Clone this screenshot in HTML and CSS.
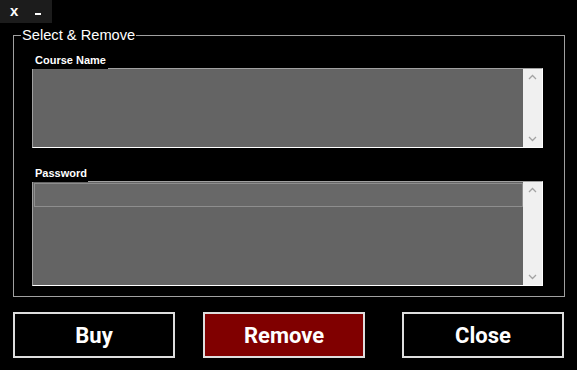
FILE: index.html
```html
<!DOCTYPE html>
<html>
<head>
<meta charset="utf-8">
<link rel="stylesheet" href="styles.css">
</head>
<body>
<div class="titlebar">
  <span class="tb-btn tb-close">x</span>
  <span class="tb-btn tb-min"></span>
</div>
<fieldset class="group">
  <legend class="group-title">Select &amp; Remove</legend>
  <div class="field">
    <div class="field-label">Course Name</div>
    <div class="listbox lb-course">
      <div class="lb-body"></div>
      <div class="scrollbar">
        <svg class="arrow" width="17" height="17" viewBox="0 0 17 17"><path d="M5 10 L8.5 6.5 L12 10" fill="none" stroke="#a3a3a3" stroke-width="1.3"/></svg>
        <svg class="arrow" width="17" height="17" viewBox="0 0 17 17"><path d="M5 7 L8.5 10.5 L12 7" fill="none" stroke="#a3a3a3" stroke-width="1.3"/></svg>
      </div>
    </div>
  </div>
  <div class="field field-pass">
    <div class="field-label label-pass">Password</div>
    <div class="listbox lb-pass">
      <div class="lb-body"><div class="lb-item"></div></div>
      <div class="scrollbar">
        <svg class="arrow" width="17" height="17" viewBox="0 0 17 17"><path d="M5 10 L8.5 6.5 L12 10" fill="none" stroke="#a3a3a3" stroke-width="1.3"/></svg>
        <svg class="arrow" width="17" height="17" viewBox="0 0 17 17"><path d="M5 7 L8.5 10.5 L12 7" fill="none" stroke="#a3a3a3" stroke-width="1.3"/></svg>
      </div>
    </div>
  </div>
</fieldset>
<div class="buttons">
  <button class="btn btn-buy">Buy</button>
  <button class="btn btn-remove">Remove</button>
  <button class="btn btn-close">Close</button>
</div>
</body>
</html>
```
FILE: styles.css
```css
html, body {
  margin: 0;
  padding: 0;
  background: #000;
  width: 577px;
  height: 370px;
  overflow: hidden;
  font-family: "Liberation Sans", Arial, sans-serif;
  color: #fff;
}

.titlebar {
  width: 52px;
  height: 23px;
  background: #1c1c1c;
  display: flex;
  align-items: center;
  box-sizing: border-box;
  padding-left: 10px;
}

.tb-btn {
  font-weight: bold;
  font-size: 15px;
  line-height: 15px;
  color: #fff;
}

.tb-close {
  margin-top: -3px;
}

.tb-min {
  width: 6px;
  height: 2px;
  background: #fff;
  margin-left: 17px;
  margin-top: 5px;
}

.group {
  margin: 4px 0 0 13px;
  width: 552px;
  height: 270px;
  box-sizing: border-box;
  border: 1px solid #a0a0a0;
  padding: 9px 21px 9px 18px;
  display: flex;
  flex-direction: column;
}

.group-title {
  margin-left: -11px;
  padding: 0 1px;
  font-size: 14.67px;
  line-height: 16px;
  color: #fff;
}

.field {
  display: flex;
  flex-direction: column;
}

.field-pass {
  margin-top: 16px;
}

.field-label {
  position: relative;
  z-index: 1;
  align-self: flex-start;
  background: #000;
  font-weight: bold;
  font-size: 11px;
  line-height: 17px;
  width: 76px;
  box-sizing: border-box;
  padding-left: 3px;
  margin-bottom: -1px;
}

.label-pass {
  width: 56px;
  line-height: 18px;
}

.listbox {
  display: flex;
  width: 511px;
  box-sizing: border-box;
  border-top: 1px solid #a0a0a0;
  border-left: 1px solid #a0a0a0;
  border-bottom: 1px solid #fff;
  border-right: 1px solid #fff;
  background: #646464;
}

.lb-course {
  height: 80px;
}

.lb-pass {
  height: 105px;
}

.lb-body {
  flex: 1;
  padding: 1px 0 0 1px;
}

.lb-item {
  height: 24px;
  box-sizing: border-box;
  border: 1px solid #8e8e8e;
  background: #686868;
}

.scrollbar {
  width: 19px;
  background: #f0f0f0;
  display: flex;
  flex-direction: column;
  justify-content: space-between;
  align-items: center;
}

.arrow {
  display: block;
}

.buttons {
  display: flex;
  margin-top: 15px;
  padding-left: 13px;
}

.btn {
  width: 162px;
  height: 46px;
  box-sizing: border-box;
  border: 2px solid #dedede;
  background: #000;
  color: #fff;
  font-family: Roboto, "Liberation Sans", Arial, sans-serif;
  font-weight: bold;
  font-size: 22px;
  padding: 0;
  margin: 0;
}

.btn-remove {
  margin-left: 28px;
  background: #800000;
}

.btn-close {
  margin-left: 37px;
}
```
